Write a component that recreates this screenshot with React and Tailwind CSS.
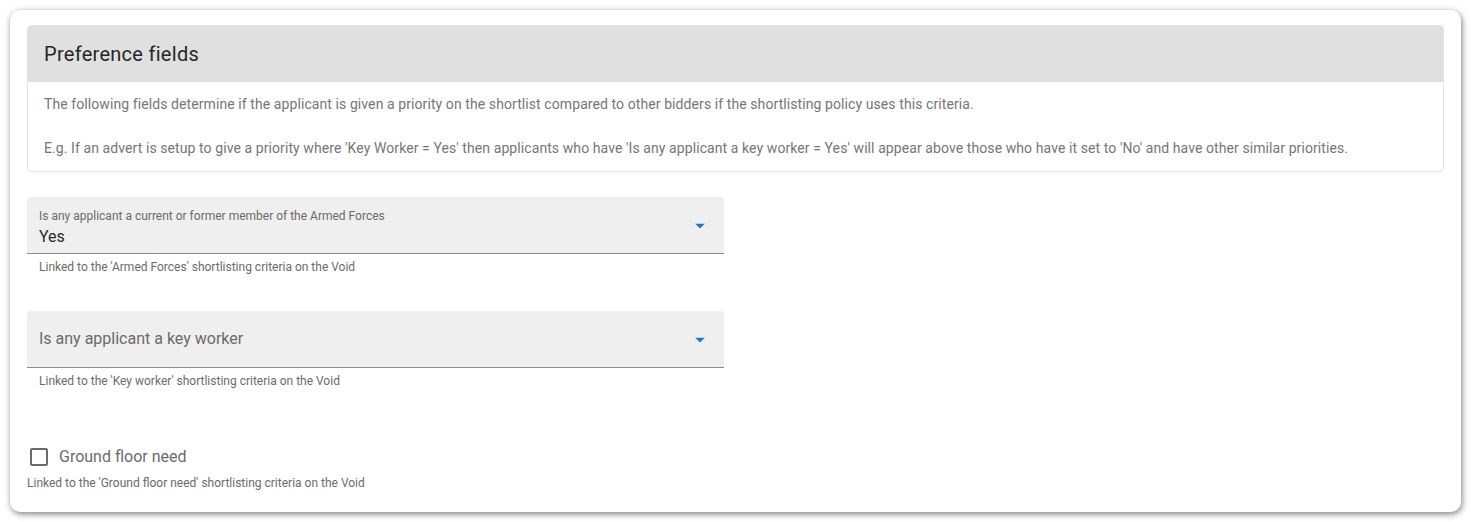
export default function App() {
  return (
    <div className="w-[1471px] h-[522px] bg-white pt-[10px] pl-[10px]" style={{ fontFamily: 'Roboto, "Liberation Sans", sans-serif' }}>
      <div className="w-[1451px] h-[502px] rounded-[10px] bg-white shadow-[1px_2px_6px_rgba(0,0,0,0.5)] px-[17px] pt-[15px]">
        <div className="w-[1417px] rounded-[4px] border border-[#e3e3e3] overflow-hidden">
          <div className="h-[56px] bg-[#e0e0e0] flex items-center px-[16px]">
            <h2 className="text-[20px] tracking-[0.28px] text-[#262626] font-normal">Preference fields</h2>
          </div>
          <div className="px-[16px] pt-[11px] pb-[12px] text-[14px] leading-[22px] tracking-[0.085px] text-[#767676]">
            <p>The following fields determine if the applicant is given a priority on the shortlist compared to other bidders if the shortlisting policy uses this criteria.</p>
            <p className="mt-[22px]">E.g. If an advert is setup to give a priority where 'Key Worker = Yes' then applicants who have 'Is any applicant a key worker = Yes' will appear above those who have it set to 'No' and have other similar priorities.</p>
          </div>
        </div>

        <div className="mt-[25px] w-[697px]">
          <SelectField label="Is any applicant a current or former member of the Armed Forces" value="Yes" />
          <p className="mt-[5px] pl-[12px] text-[12px] leading-[16px] text-[#6b6b6b]">Linked to the 'Armed Forces' shortlisting criteria on the Void</p>
        </div>

        <div className="mt-[36px] w-[697px]">
          <SelectField placeholder="Is any applicant a key worker" />
          <p className="mt-[5px] pl-[12px] text-[12px] leading-[16px] text-[#6b6b6b]">Linked to the 'Key worker' shortlisting criteria on the Void</p>
        </div>

        <div className="mt-[56px]">
          <label className="flex items-center h-[24px] pl-[3px]">
            <span className="w-[18px] h-[18px] border-2 border-[#6b6b6b] rounded-[2px]" />
            <span className="ml-[11px] text-[16px] text-[#6b6b6b]">Ground floor need</span>
          </label>
          <p className="mt-[6px] text-[12px] leading-[16px] text-[#6b6b6b]">Linked to the 'Ground floor need' shortlisting criteria on the Void</p>
        </div>
      </div>
    </div>
  );
}

function SelectField({ label, value, placeholder }) {
  return (
    <div className="relative h-[57px] bg-[#efefef] rounded-t-[4px] border-b border-[#8c8c8c] px-[12px]">
      {label ? (
        <div className="pt-[12px]">
          <div className="text-[12px] leading-[14px] text-[#6b6b6b]">{label}</div>
          <div className="mt-[3px] text-[16px] leading-[22px] text-[#2a2a2a]">{value}</div>
        </div>
      ) : (
        <div className="h-full flex items-center text-[16px] text-[#6b6b6b]">{placeholder}</div>
      )}
      <svg className="absolute right-[19px] top-1/2 -translate-y-1/2 mt-[1px]" width="10" height="5" viewBox="0 0 10 5">
        <path d="M0 0 L10 0 L5 5 Z" fill="#1976d2" />
      </svg>
    </div>
  );
}
